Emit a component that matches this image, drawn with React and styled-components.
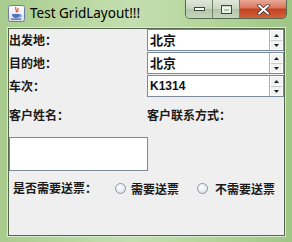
import React from 'react'
import styled, { createGlobalStyle } from 'styled-components'

const Global = createGlobalStyle`
  html, body { margin: 0; padding: 0; background: #9cc283; }
  * { box-sizing: border-box; }
`

const CJK = `"Noto Sans CJK SC", "Noto Sans", sans-serif`

function JavaIcon() {
  return (
    <svg width="17" height="17" viewBox="0 0 17 17">
      <defs>
        <linearGradient id="jbg" x1="0" y1="0" x2="0" y2="1">
          <stop offset="0" stopColor="#ffffff" />
          <stop offset="1" stopColor="#d9dde8" />
        </linearGradient>
      </defs>
      <rect x="0.5" y="0.5" width="16" height="16" rx="2" fill="url(#jbg)" stroke="#6f7f9c" />
      <path d="M8 2 C6 4 10 5 8 7.5 M10 3 C9 4.5 11 5 9.5 7" stroke="#e0552a" strokeWidth="1.2" fill="none" />
      <path d="M4 9 H12 C12 12 10 13 8 13 C6 13 4 12 4 9 Z" fill="#4a74c0" />
      <path d="M12 10 C14 10 14 12 11.5 12" stroke="#4a74c0" strokeWidth="1" fill="none" />
      <rect x="3" y="13.5" width="10" height="1.2" fill="#3a5aa0" />
    </svg>
  )
}

function Spinner() {
  return (
    <SpinBox>
      <SpinHalf>
        <svg width="5" height="3" viewBox="0 0 5 3"><path d="M2.5 0 L5 3 H0 Z" fill="#222" /></svg>
      </SpinHalf>
      <SpinHalf>
        <svg width="5" height="3" viewBox="0 0 5 3"><path d="M0 0 H5 L2.5 3 Z" fill="#222" /></svg>
      </SpinHalf>
    </SpinBox>
  )
}

function Combo({ value, latin }) {
  return (
    <ComboBox>
      <ComboText latin={latin}>{value}</ComboText>
      <Spinner />
    </ComboBox>
  )
}

export default function App() {
  return (
    <Window>
      <Global />
      <TitleBar>
        <IconSlot><JavaIcon /></IconSlot>
        <Title>Test GridLayout!!!</Title>
        <Controls>
          <CtrlButton>
            <svg width="11" height="4" viewBox="0 0 11 4"><rect x="0.5" y="0.5" width="10" height="3" fill="#fff" stroke="#3c4a3a" /></svg>
          </CtrlButton>
          <CtrlButton>
            <svg width="11" height="9" viewBox="0 0 11 9"><rect x="0.5" y="0.5" width="10" height="8" fill="none" stroke="#3c4a3a" /><rect x="2" y="3" width="7" height="4" fill="none" stroke="#fff" strokeWidth="1.4" /></svg>
          </CtrlButton>
          <CloseButton>
            <svg width="13" height="11" viewBox="0 0 13 11">
              <path d="M2 1.5 L11 9.5 M11 1.5 L2 9.5" stroke="#3b2a26" strokeWidth="3.4" strokeLinecap="round" />
              <path d="M2 1.5 L11 9.5 M11 1.5 L2 9.5" stroke="#fff" strokeWidth="2" strokeLinecap="round" />
            </svg>
          </CloseButton>
        </Controls>
      </TitleBar>
      <Content>
        <Grid>
          <Label>出发地：</Label>
          <Combo value="北京" />
          <Label>目的地：</Label>
          <Combo value="北京" />
          <Label>车次：</Label>
          <Combo value="K1314" latin />
        </Grid>
        <HeadRow>
          <Label>客户姓名：</Label>
          <Label>客户联系方式：</Label>
        </HeadRow>
        <TextArea />
        <RadioRow>
          <Label>是否需要送票：</Label>
          <RadioItem><Radio />需要送票</RadioItem>
          <RadioItem><Radio />不需要送票</RadioItem>
        </RadioRow>
      </Content>
    </Window>
  )
}

const Window = styled.div`
  width: 292px;
  height: 242px;
  display: flex;
  flex-direction: column;
  padding: 0 7px 6px 8px;
  background: linear-gradient(90deg, #a9cc8e 0%, #c4dfb0 45%, #b2d398 75%, #9fc585 100%);
`

const TitleBar = styled.div`
  height: 28px;
  display: flex;
  align-items: flex-start;
  position: relative;
`

const IconSlot = styled.div`
  margin-top: 5px;
  width: 17px;
  height: 17px;
`

const Title = styled.div`
  margin: 4px 0 0 5px;
  font-family: "Noto Sans", sans-serif;
  font-size: 13.5px;
  line-height: 18px;
  color: #000;
`

const Controls = styled.div`
  position: absolute;
  top: 0;
  right: -2px;
  display: flex;
  height: 19px;
  border: 1px solid #55694d;
  border-top: none;
  border-radius: 0 0 5px 5px;
  overflow: hidden;
`

const CtrlButton = styled.div`
  width: 27px;
  display: flex;
  align-items: center;
  justify-content: center;
  background: linear-gradient(180deg, #dfe7da 0%, #c8d4c0 50%, #b3c4aa 51%, #c6d6bc 100%);
  border-right: 1px solid #6d8264;
`

const CloseButton = styled.div`
  width: 46px;
  display: flex;
  align-items: center;
  justify-content: center;
  background: linear-gradient(180deg, #e8a896 0%, #d9755b 45%, #c2401f 50%, #d2623f 100%);
`

const Content = styled.div`
  flex: 1;
  background: #efefef;
  border: 1px solid #54664c;
  box-shadow: 0 0 0 1px #d9ead0;
  display: flex;
  flex-direction: column;
`

const Grid = styled.div`
  display: grid;
  grid-template-columns: 138px 137px;
  grid-auto-rows: 23px;
`

const Label = styled.div`
  font-family: ${CJK};
  font-weight: bold;
  font-size: 12px;
  line-height: 22px;
  color: #1a1a1a;
  white-space: nowrap;
`

const ComboBox = styled.div`
  height: 22px;
  display: flex;
  background: #fff;
  border: 1px solid #7b8a9b;
`

const ComboText = styled.div`
  flex: 1;
  padding-left: 2px;
  font-family: ${p => (p.latin ? `"Liberation Sans", sans-serif` : CJK)};
  font-weight: bold;
  font-size: ${p => (p.latin ? '12px' : '13px')};
  line-height: 20px;
  color: #111;
`

const SpinBox = styled.div`
  width: 14px;
  display: flex;
  flex-direction: column;
  border-left: 1px solid #a8b1bc;
`

const SpinHalf = styled.div`
  flex: 1;
  display: flex;
  align-items: center;
  justify-content: center;
  background: #f2f2f2;
  border: 1px solid #fff;
  & + & { border-top-color: #c8cdd3; }
`

const HeadRow = styled.div`
  display: grid;
  grid-template-columns: 138px 137px;
  margin-top: 6px;
`

const TextArea = styled.div`
  width: 139px;
  height: 34px;
  margin-top: 11px;
  background: #fff;
  border: 1px solid #7b8a9b;
`

const RadioRow = styled.div`
  display: flex;
  align-items: center;
  margin-top: 6px;
  padding-left: 4px;
  gap: 18px;
`

const RadioItem = styled.div`
  display: flex;
  align-items: center;
  gap: 5px;
  font-family: ${CJK};
  font-weight: bold;
  font-size: 12px;
  color: #1a1a1a;
  & + & { gap: 7px; }
`

const Radio = styled.span`
  width: 11px;
  height: 11px;
  border-radius: 50%;
  border: 1px solid #8c96a6;
  background: radial-gradient(circle at 40% 35%, #ffffff 0%, #e6ecf4 55%, #c3cfdd 100%);
`
